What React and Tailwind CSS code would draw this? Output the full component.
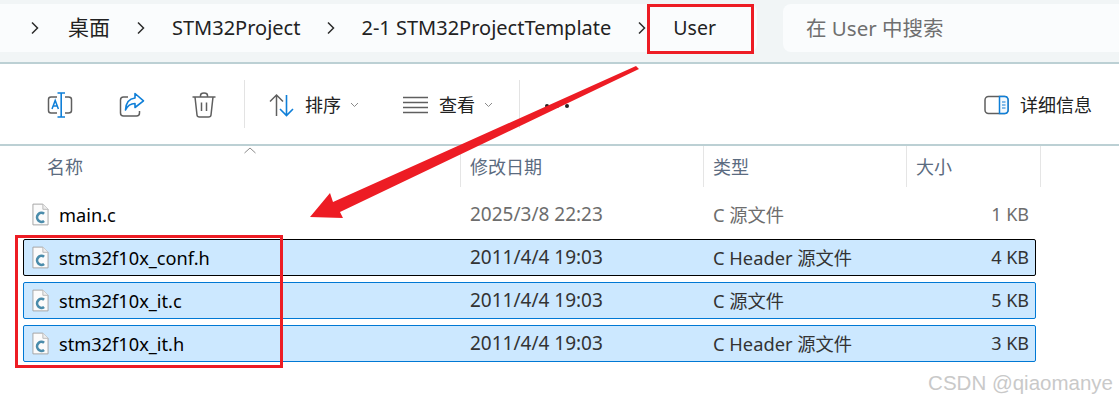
import React from "react";

const files = [
  { name: "main.c", date: "2025/3/8 22:23", type: "C 源文件", size: "1 KB" },
  { name: "stm32f10x_conf.h", date: "2011/4/4 19:03", type: "C Header 源文件", size: "4 KB", selected: true, focus: true },
  { name: "stm32f10x_it.c", date: "2011/4/4 19:03", type: "C 源文件", size: "5 KB", selected: true },
  { name: "stm32f10x_it.h", date: "2011/4/4 19:03", type: "C Header 源文件", size: "3 KB", selected: true },
];

const Chevron = ({ className }) => (
  <svg width="10" height="14" viewBox="0 0 10 14" fill="none" stroke="#2b2b2b" strokeWidth="1.5" className={className}>
    <path d="M2 1.5 L7.5 7 L2 12.5" />
  </svg>
);

const SmallCaret = ({ className }) => (
  <svg width="9" height="6" viewBox="0 0 9 6" fill="none" stroke="#8a8a8a" strokeWidth="1" className={className}>
    <path d="M1 1 L4.5 4.5 L8 1" />
  </svg>
);

const FileIcon = () => (
  <svg width="17" height="23" viewBox="0 0 18 24" className="shrink-0">
    <path d="M1 1 H11.5 L17 6.5 V23 H1 Z" fill="#fbfbfb" stroke="#a3a3a3" />
    <path d="M11.5 1 V6.5 H17" fill="#eeeeee" stroke="#b8b8b8" />
    <path d="M12.8 11.2 A4.6 4.8 0 1 0 12.8 18.8" fill="none" stroke="#4a8cab" strokeWidth="2.8" />
  </svg>
);

const RenameIcon = () => (
  <svg width="26" height="26" viewBox="0 0 26 26" fill="none">
    <path d="M10 5 H4 Q1.5 5 1.5 7.5 V18.5 Q1.5 21 4 21 H10" stroke="#5f5f5f" strokeWidth="1.5" />
    <path d="M18 5 H21.5 Q24.5 5 24.5 7.5 V18.5 Q24.5 21 21.5 21 H18" stroke="#5f5f5f" strokeWidth="1.5" />
    <path d="M10.5 1 H18 M14.2 1 V25 M10.5 25 H18" stroke="#0f7fd8" strokeWidth="1.6" />
    <path d="M5 17 L8.2 8.5 L11.4 17 M6.2 14 H10.2" stroke="#0f7fd8" strokeWidth="1.5" />
  </svg>
);

const ShareIcon = () => (
  <svg width="26" height="26" viewBox="0 0 26 26" fill="none">
    <path d="M9 5 H4.5 Q1.5 5 1.5 8 V21 Q1.5 24 4.5 24 H17.5 Q20.5 24 20.5 21 V19" stroke="#5f5f5f" strokeWidth="1.5" />
    <path d="M16 1.5 L24.5 8.8 L16 15.5 V11.5 Q9.5 11.5 6.5 18 Q7 7 16 6 Z" stroke="#0f7fd8" strokeWidth="1.6" strokeLinejoin="round" />
  </svg>
);

const TrashIcon = () => (
  <svg width="24" height="26" viewBox="0 0 24 26" fill="none" stroke="#5f5f5f" strokeWidth="1.5">
    <path d="M0.5 5 H23.5" />
    <path d="M8.5 5 V3.5 Q8.5 1 12 1 Q15.5 1 15.5 3.5 V5" />
    <path d="M3 5 L5 23 Q5.2 25 7.5 25 H16.5 Q18.8 25 19 23 L21 5" />
    <path d="M9.5 10.5 V19 M14.5 10.5 V19" />
  </svg>
);

const SortIcon = () => (
  <svg width="25" height="24" viewBox="0 0 25 24" fill="none">
    <path d="M1 8.5 L7.5 2 L14 8.5 M7.5 2 V23" stroke="#5f5f5f" strokeWidth="1.5" />
    <path d="M11 16 L17.5 22.5 L24 16 M17.5 22.5 V2" stroke="#0f7fd8" strokeWidth="1.6" />
  </svg>
);

const ViewIcon = () => (
  <svg width="25" height="18" viewBox="0 0 25 18" fill="none" stroke="#5f5f5f" strokeWidth="1.4">
    <path d="M0 1.5 H25 M0 6.5 H25 M0 11.5 H25 M0 16.5 H25" />
  </svg>
);

const DetailsIcon = () => (
  <svg width="25" height="20" viewBox="0 0 25 20" fill="none">
    <rect x="1" y="1.5" width="23" height="17" rx="3.5" stroke="#5f5f5f" strokeWidth="1.5" />
    <path d="M15.5 1.5 H20.5 Q24 1.5 24 5 V15 Q24 18.5 20.5 18.5 H15.5 Z" fill="#f4f9fd" stroke="#0f7fd8" strokeWidth="1.5" />
    <path d="M18 7 H21.5 M18 10 H21.5 M18 13 H21.5" stroke="#0f7fd8" strokeWidth="1.2" />
  </svg>
);

const FileRow = ({ file }) => {
  const rowBorder = file.focus
    ? "border-black bg-[#cce8ff]"
    : file.selected
      ? "border-[#0078d4] bg-[#cce8ff]"
      : "border-transparent";
  const cellColor = file.selected ? "text-[#333]" : "text-[#6d6d6d]";
  return (
    <div className={`ml-[23px] w-[1013px] h-[37px] border rounded-[2px] grid grid-cols-[436px_243px_203px_123px] items-center ${rowBorder}`}>
      <div className="flex items-center pl-[8px] gap-[10px] text-black text-[18.2px]">
        <FileIcon />
        <span className="pt-[2px]">{file.name}</span>
      </div>
      <div className={`pl-[10px] text-[19px] ${cellColor}`}>{file.date}</div>
      <div className={`pl-[10px] text-[18.3px] ${cellColor}`}>{file.type}</div>
      <div className={`text-right text-[18px] ${cellColor}`}>{file.size}</div>
    </div>
  );
};

export default function App() {
  return (
    <div className="relative w-[1119px] h-[400px] overflow-hidden bg-white font-['Noto_Sans','Noto_Sans_CJK_SC',sans-serif] text-[18px]">
      {/* address bar */}
      <div className="h-[64px] bg-[#f1f5f6] border-b-2 border-[#bcd0d4] pt-[4px] flex items-start">
        <div className="w-[757px] h-[48px] bg-[#fafcfd] rounded-r-[8px] flex items-center text-[20px] text-[#222]">
          <Chevron className="ml-[30px]" />
          <span className="ml-[28px] text-[21px]">桌面</span>
          <Chevron className="ml-[26px]" />
          <span className="ml-[26px]">STM32Project</span>
          <Chevron className="ml-[26px]" />
          <span className="ml-[25px]">2-1 STM32ProjectTemplate</span>
          <Chevron className="ml-[26px]" />
          <span className="ml-[26px] text-[19.5px]">User</span>
        </div>
        <div className="ml-[26px] flex-1 h-[48px] bg-[#fafcfd] rounded-l-[8px] flex items-center pl-[23px] text-[20.5px] text-[#6f6f6f]">
          在 User 中搜索
        </div>
      </div>

      {/* toolbar */}
      <div className="h-[82px] border-b-2 border-[#bcd0d4] flex items-center text-[#222]">
        <div className="ml-[47px] mt-[2px]"><RenameIcon /></div>
        <div className="ml-[46px] mt-[2px]"><ShareIcon /></div>
        <div className="ml-[47px] mt-[2px]"><TrashIcon /></div>
        <div className="ml-[28px] w-px h-[48px] bg-[#e3e3e3]" />
        <div className="ml-[24px] mt-[2px]"><SortIcon /></div>
        <span className="ml-[11px] mt-[3px]">排序</span>
        <SmallCaret className="ml-[9px] mt-[2px]" />
        <div className="ml-[44px] mt-[2px]"><ViewIcon /></div>
        <span className="ml-[11px] mt-[3px]">查看</span>
        <SmallCaret className="ml-[9px] mt-[2px]" />
        <div className="ml-[26px] w-px h-[48px] bg-[#e3e3e3]" />
        <div className="ml-[25px] mt-[3px] flex gap-[6px]">
          <div className="w-[4px] h-[4px] rounded-full bg-[#222]" />
          <div className="w-[4px] h-[4px] rounded-full bg-[#222]" />
          <div className="w-[4px] h-[4px] rounded-full bg-[#222]" />
        </div>
        <div className="ml-auto mt-[2px]"><DetailsIcon /></div>
        <span className="ml-[11px] mr-[27px] mt-[3px]">详细信息</span>
      </div>

      {/* column headers */}
      <div className="relative h-[41px] grid grid-cols-[460px_243px_203px_135px] text-[#5b6b80]">
        <div className="pl-[47px] pt-[8px]">名称</div>
        <div className="border-l border-[#e5e5e5] pl-[9px] pt-[8px]">修改日期</div>
        <div className="border-l border-[#e5e5e5] pl-[9px] pt-[8px]">类型</div>
        <div className="border-l border-r border-[#e5e5e5] pl-[9px] pt-[8px]">大小</div>
        <svg width="12" height="7" viewBox="0 0 12 7" fill="none" stroke="#8a8a8a" className="absolute left-[244px] top-[1px]">
          <path d="M0.5 6 L6 1 L11.5 6" />
        </svg>
      </div>

      {/* file list */}
      <div className="mt-[9px] flex flex-col gap-[6px]">
        {files.map((f) => (
          <FileRow key={f.name} file={f} />
        ))}
      </div>

      <div className="absolute right-[6px] top-[368px] font-['Liberation_Sans',sans-serif] text-[20.5px] text-[#c9c9c9]">
        CSDN @qiaomanye
      </div>

      {/* red annotations */}
      <div className="absolute left-[647px] top-[4px] w-[107px] h-[50px] border-[3px] border-[#ed1c24]" />
      <div className="absolute left-[15px] top-[235px] w-[268px] h-[133px] border-[3px] border-[#ed1c24]" />
      <svg width="1119" height="400" className="absolute left-0 top-0 pointer-events-none">
        <polygon points="310,217 330,193 333,202 636,66 639,69 340,212 343,218" fill="#ed1c24" />
      </svg>
    </div>
  );
}
